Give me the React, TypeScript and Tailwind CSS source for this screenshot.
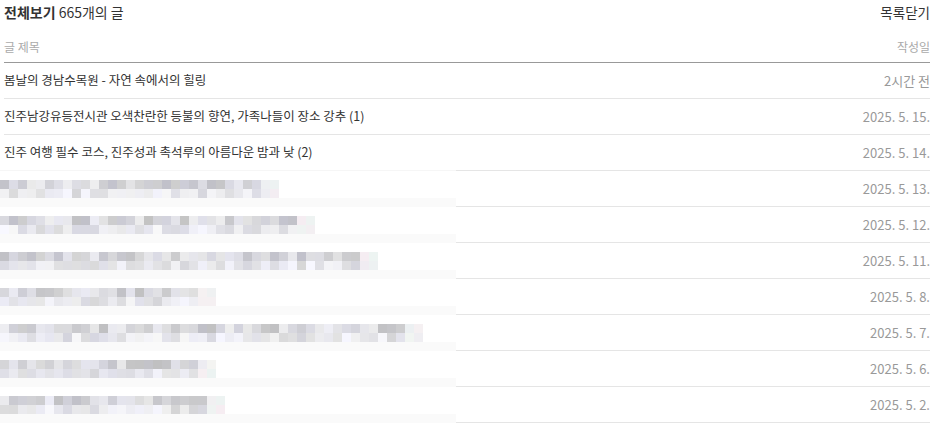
import React from 'react'

type Post = { title?: string; date: string; blur?: number }

const posts: Post[] = [
  { title: '봄날의 경남수목원 - 자연 속에서의 힐링', date: '2시간 전' },
  { title: '진주남강유등전시관 오색찬란한 등불의 향연, 가족나들이 장소 강추 (1)', date: '2025. 5. 15.' },
  { title: '진주 여행 필수 코스, 진주성과 촉석루의 아름다운 밤과 낮 (2)', date: '2025. 5. 14.' },
  { blur: 31, date: '2025. 5. 13.' },
  { blur: 35, date: '2025. 5. 12.' },
  { blur: 42, date: '2025. 5. 11.' },
  { blur: 24, date: '2025. 5. 8.' },
  { blur: 47, date: '2025. 5. 7.' },
  { blur: 24, date: '2025. 5. 6.' },
  { blur: 25, date: '2025. 5. 2.' },
]

// small seeded generator so the mosaic is the same on every render
function rng(seed: number) {
  let s = seed
  return () => {
    s = (s * 9301 + 49297) % 233280
    return s / 233280
  }
}

function shade(r: () => number, top: boolean) {
  const base = top ? 192 : 212
  const v = Math.round(base + r() * (top ? 46 : 36))
  const b = Math.min(255, v + Math.round(r() * 10))
  return `rgb(${v},${v},${b})`
}

function Mosaic({ cells, seed }: { cells: number; seed: number }) {
  const r = rng(seed)
  const rows = [true, false].map((top) =>
    Array.from({ length: cells }, (_, i) => (i >= cells - 2 ? `rgb(${236 + Math.round(r() * 10)},${236 + Math.round(r() * 10)},${242})` : shade(r, top)))
  )
  return (
    <div className="flex flex-col">
      {rows.map((row, ri) => (
        <div key={ri} className="flex h-[9px]">
          {row.map((c, ci) => (
            <div key={ci} className="w-[9px] h-[9px]" style={{ background: c }} />
          ))}
        </div>
      ))}
    </div>
  )
}

export default function App() {
  return (
    <div className="w-[934px] h-[425px] bg-white font-['Noto_Sans_CJK_KR','Noto_Sans',sans-serif] text-[12.5px] text-[#333] overflow-hidden">
      <div className="px-1">
        <div className="h-6 flex items-center justify-between">
          <div className="text-[14px]">
            <span className="font-bold">전체보기</span> 665개의 글
          </div>
          <div className="text-[13.5px]">목록닫기</div>
        </div>
        <div className="h-[39px] pt-2 flex items-center justify-between border-b border-[#999] text-[12px] text-[#aaa]">
          <span>글 제목</span>
          <span>작성일</span>
        </div>
      </div>

      {posts.map((p, i) =>
        p.blur ? (
          <div key={i} className="flex h-9">
            <div className="w-[456px] flex flex-col pt-[9px]">
              <Mosaic cells={p.blur} seed={i * 37 + 11} />
              <div className="h-[9px] bg-[#fafafa]" />
            </div>
            <div className="flex-1 mr-1 border-b border-[#e5e5e5] flex items-center justify-end text-[13px] text-[#999]">
              {p.date}
            </div>
          </div>
        ) : i === 2 ? (
          <div key={i} className="flex h-9">
            <div className="w-[456px] pl-1 flex items-center border-b border-[#f6f6f6]">{p.title}</div>
            <div className="flex-1 mr-1 border-b border-[#e5e5e5] flex items-center justify-end text-[13px] text-[#999]">
              {p.date}
            </div>
          </div>
        ) : (
          <div key={i} className="mx-1 h-9 flex items-center justify-between border-b border-[#e5e5e5]">
            <span>{p.title}</span>
            <span className="text-[13px] text-[#999]">{p.date}</span>
          </div>
        )
      )}
    </div>
  )
}
